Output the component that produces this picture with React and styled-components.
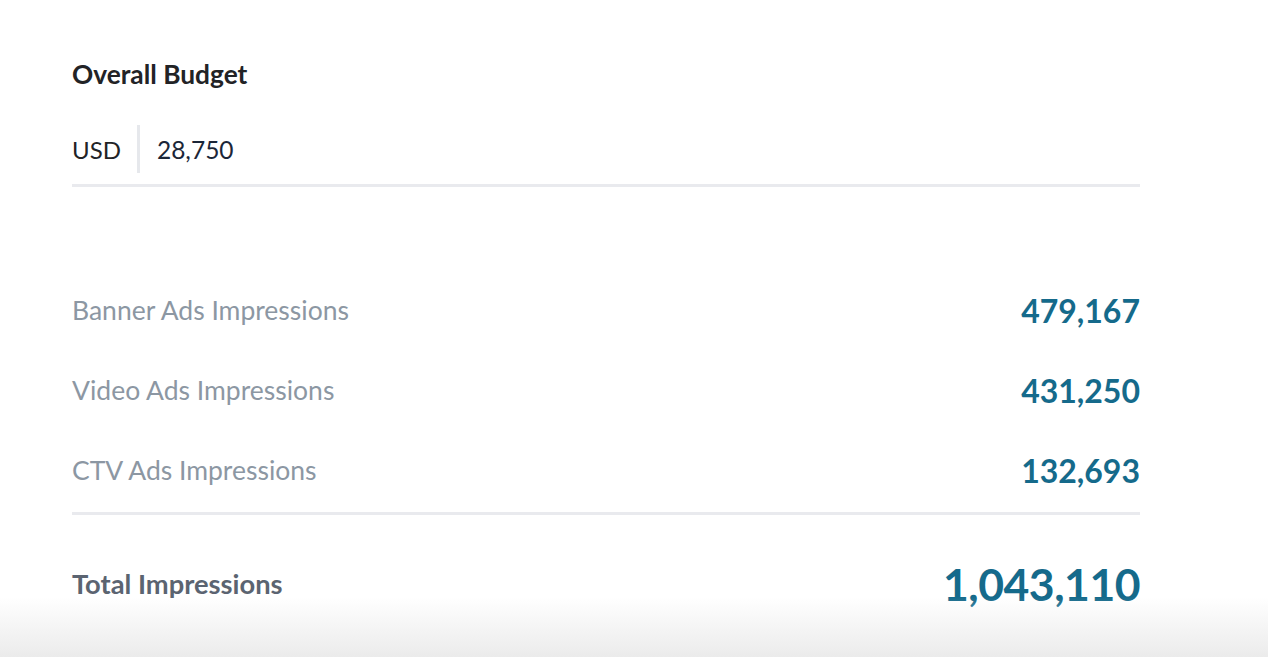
import React from "react";
import styled, { createGlobalStyle } from "styled-components";

const GlobalStyle = createGlobalStyle`
  html, body {
    margin: 0;
    padding: 0;
    background: #ffffff;
  }
  body {
    font-family: "Lato", "Open Sans", "Liberation Sans", sans-serif;
  }
`;

const Page = styled.div`
  box-sizing: border-box;
  width: 1268px;
  height: 657px;
  position: relative;
  overflow: hidden;
  background: #ffffff;
`;

const Panel = styled.div`
  box-sizing: border-box;
  width: 1140px;
  padding: 58px 0 0 72px;
  display: flex;
  flex-direction: column;
`;

const Title = styled.h2`
  margin: 0;
  font-size: 26.3px;
  line-height: 32px;
  font-weight: 700;
  color: #222326;
`;

const BudgetField = styled.div`
  display: flex;
  align-items: stretch;
  margin-top: 35px;
  padding-bottom: 11px;
  border-bottom: 3px solid #e9eaee;
`;

const Currency = styled.div`
  display: flex;
  align-items: center;
  padding-right: 16px;
  font-size: 24px;
  color: #222326;
  height: 48px;
`;

const Separator = styled.div`
  width: 3px;
  background: #e6e8ec;
`;

const Amount = styled.div`
  display: flex;
  align-items: center;
  padding-left: 17px;
  font-size: 24.5px;
  color: #1b2638;
`;

const Stats = styled.div`
  display: flex;
  flex-direction: column;
  margin-top: 83px;
`;

const StatRow = styled.div`
  display: flex;
  justify-content: space-between;
  align-items: center;
  height: 80px;
`;

const StatLabel = styled.span`
  font-size: ${(p) => (p.$total ? "27.3px" : "26.5px")};
  font-weight: ${(p) => (p.$total ? 700 : 400)};
  color: ${(p) => (p.$total ? "#5b6471" : "#8c97a3")};
`;

const StatValue = styled.span`
  font-size: ${(p) => (p.$total ? "44.5px" : "32px")};
  font-weight: 700;
  color: #156a8b;
  letter-spacing: ${(p) => (p.$total ? "-0.5px" : "0")};
`;

const Rule = styled.div`
  height: 3px;
  background: #e9eaee;
  margin-top: 2px;
`;

const TotalRow = styled(StatRow)`
  height: 140px;
  margin-top: -2px;
`;

const FooterFade = styled.div`
  position: absolute;
  left: 0;
  right: 0;
  bottom: 0;
  height: 60px;
  background: linear-gradient(to bottom, rgba(236, 236, 236, 0), #ebebeb);
  pointer-events: none;
`;

const stats = [
  { label: "Banner Ads Impressions", value: "479,167" },
  { label: "Video Ads Impressions", value: "431,250" },
  { label: "CTV Ads Impressions", value: "132,693" },
];

export default function App() {
  return (
    <Page>
      <GlobalStyle />
      <Panel>
        <Title>Overall Budget</Title>
        <BudgetField>
          <Currency>USD</Currency>
          <Separator />
          <Amount>28,750</Amount>
        </BudgetField>
        <Stats>
          {stats.map((s) => (
            <StatRow key={s.label}>
              <StatLabel>{s.label}</StatLabel>
              <StatValue>{s.value}</StatValue>
            </StatRow>
          ))}
          <Rule />
          <TotalRow>
            <StatLabel $total>Total Impressions</StatLabel>
            <StatValue $total>1,043,110</StatValue>
          </TotalRow>
        </Stats>
      </Panel>
      <FooterFade />
    </Page>
  );
}
